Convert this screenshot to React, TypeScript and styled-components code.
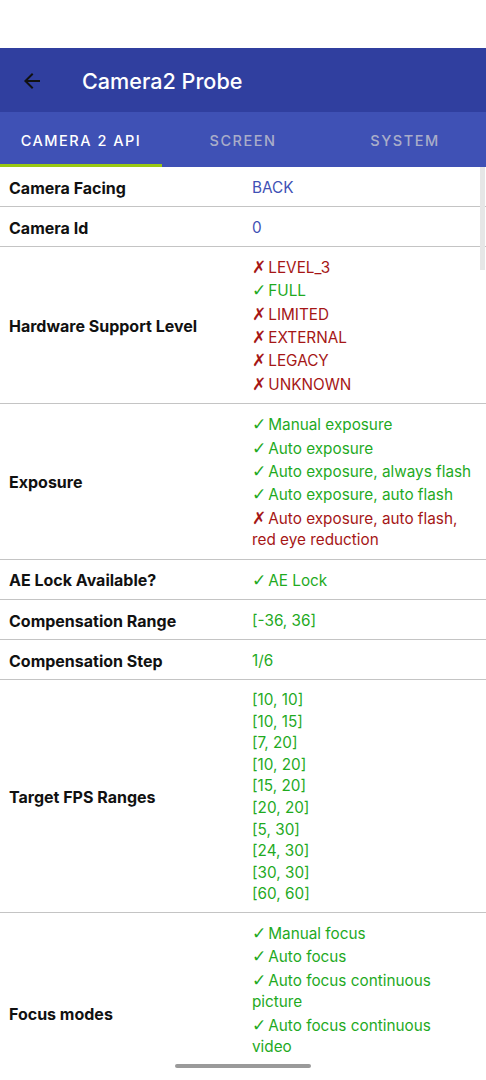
import React from "react";
import styled, { createGlobalStyle } from "styled-components";

const Global = createGlobalStyle`
  html, body { margin: 0; padding: 0; background: #fff; }
  body { font-family: Inter, "DejaVu Sans", sans-serif; }
  * { box-sizing: border-box; }
`;

const Screen = styled.div`
  width: 486px;
  height: 1080px;
  display: flex;
  flex-direction: column;
  overflow: hidden;
  position: relative;
  background: #fff;
`;

const StatusBar = styled.div`
  height: 48px;
  flex: none;
  background: #fff;
`;

const Toolbar = styled.div`
  height: 64px;
  flex: none;
  background: #303f9f;
  display: flex;
  align-items: center;
  padding: 2px 0 0 20px;
  gap: 38px;
`;

const Title = styled.div`
  color: #fff;
  font-size: 21.6px;
  font-weight: 500;
`;

const Tabs = styled.div`
  height: 55px;
  flex: none;
  background: #3f51b5;
  display: grid;
  grid-template-columns: repeat(3, 1fr);
`;

const Tab = styled.div<{ $active?: boolean }>`
  display: flex;
  align-items: center;
  justify-content: center;
  font-size: 14.5px;
  font-weight: 500;
  letter-spacing: 1.5px;
  color: ${(p) => (p.$active ? "#fff" : "#a9adc9")};
  border-bottom: 3px solid ${(p) => (p.$active ? "#99c812" : "transparent")};
  padding-top: 4px;
`;

const Content = styled.div`
  flex: 1;
  overflow: hidden;
  position: relative;
`;

const Row = styled.div`
  display: grid;
  grid-template-columns: 243px 1fr;
  padding: 9px 12.7px 7px 9px;
  min-height: 40px;
  border-bottom: 1px solid #c4c4c4;
  align-items: center;
`;

const Label = styled.div`
  font-size: 16px;
  font-weight: 700;
  color: #111;
`;

const Values = styled.div`
  display: flex;
  flex-direction: column;
  font-size: 15.3px;
  line-height: 21.6px;
`;

const Item = styled.div<{ $tone: "blue" | "ok" | "no" | "green" }>`
  color: ${(p) =>
    p.$tone === "blue" ? "#3f51b5" : p.$tone === "no" ? "#a51616" : "#1faa1f"};
  padding-block: ${(p) => (p.$tone === "ok" || p.$tone === "no" ? "0.9px" : "0")};
`;

const Mark = styled.span`
  font-family: "DejaVu Sans", sans-serif;
  font-weight: bold;
  font-size: 17px;
  line-height: 1;
  margin-right: 2px;
`;

const ScrollThumb = styled.div`
  position: absolute;
  right: 1px;
  top: 0;
  width: 5px;
  height: 103px;
  background: #e6e6e6;
`;

const NavBar = styled.div`
  height: 28px;
  flex: none;
  display: flex;
  justify-content: center;
  padding-top: 12px;
  background: #fff;
`;

const Handle = styled.div`
  width: 136px;
  height: 4px;
  border-radius: 2px;
  background: #9a9a9a;
`;

type V = { t: string; tone: "blue" | "ok" | "no" | "green" };

const ok = (t: string): V => ({ t, tone: "ok" });
const no = (t: string): V => ({ t, tone: "no" });
const g = (t: string): V => ({ t, tone: "green" });
const b = (t: string): V => ({ t, tone: "blue" });

const rows: { label: string; values: V[] }[] = [
  { label: "Camera Facing", values: [b("BACK")] },
  { label: "Camera Id", values: [b("0")] },
  {
    label: "Hardware Support Level",
    values: [no("LEVEL_3"), ok("FULL"), no("LIMITED"), no("EXTERNAL"), no("LEGACY"), no("UNKNOWN")],
  },
  {
    label: "Exposure",
    values: [
      ok("Manual exposure"),
      ok("Auto exposure"),
      ok("Auto exposure, always flash"),
      ok("Auto exposure, auto flash"),
      no("Auto exposure, auto flash, red eye reduction"),
    ],
  },
  { label: "AE Lock Available?", values: [ok("AE Lock")] },
  { label: "Compensation Range", values: [g("[-36, 36]")] },
  { label: "Compensation Step", values: [g("1/6")] },
  {
    label: "Target FPS Ranges",
    values: [
      "[10, 10]", "[10, 15]", "[7, 20]", "[10, 20]", "[15, 20]",
      "[20, 20]", "[5, 30]", "[24, 30]", "[30, 30]", "[60, 60]",
    ].map(g),
  },
  {
    label: "Focus modes",
    values: [
      ok("Manual focus"),
      ok("Auto focus"),
      ok("Auto focus continuous picture"),
      ok("Auto focus continuous video"),
      ok("Macro"),
      ok("Extended depth of field"),
    ],
  },
];

const BackArrow = () => (
  <svg width="24" height="24" viewBox="0 0 24 24">
    <path d="M20 11H7.83l5.59-5.59L12 4l-8 8 8 8 1.41-1.41L7.83 13H20v-2z" fill="#111" />
  </svg>
);

export default function App() {
  return (
    <>
      <Global />
      <Screen>
        <StatusBar />
        <Toolbar>
          <BackArrow />
          <Title>Camera2 Probe</Title>
        </Toolbar>
        <Tabs>
          <Tab $active>CAMERA 2 API</Tab>
          <Tab>SCREEN</Tab>
          <Tab>SYSTEM</Tab>
        </Tabs>
        <Content>
          {rows.map((r) => (
            <Row key={r.label}>
              <Label>{r.label}</Label>
              <Values>
                {r.values.map((v, i) => (
                  <Item key={i} $tone={v.tone}>
                    {v.tone === "ok" && <Mark>✓</Mark>}
                    {v.tone === "no" && <Mark>✗</Mark>}
                    {v.t}
                  </Item>
                ))}
              </Values>
            </Row>
          ))}
          <ScrollThumb />
        </Content>
        <NavBar>
          <Handle />
        </NavBar>
      </Screen>
    </>
  );
}
